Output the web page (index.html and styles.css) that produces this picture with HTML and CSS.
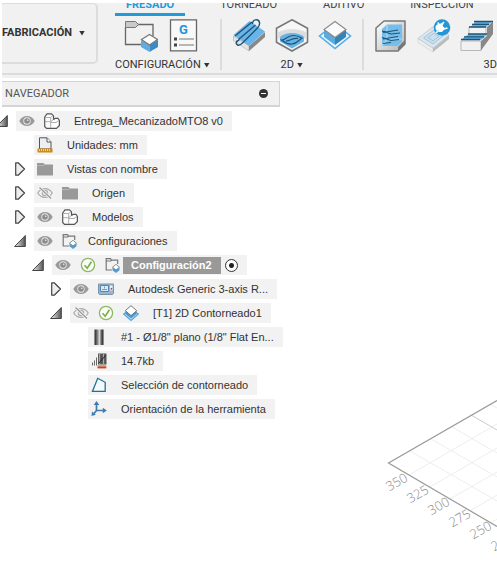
FILE: index.html
```
<!DOCTYPE html>
<html lang="es">
<head>
<meta charset="utf-8">
<meta name="viewport" content="width=device-width, initial-scale=1">
<title>Fabricación</title>
<link rel="stylesheet" href="styles.css">
</head>
<body>
<svg class="sprite" aria-hidden="true">
  <defs>
    <linearGradient id="g-tri" x1="0" y1="0" x2="1" y2="0"><stop offset="0" stop-color="#f4f4f4"/><stop offset="1" stop-color="#555"/></linearGradient>
    <linearGradient id="g-tool" x1="0" y1="0" x2="1" y2="0"><stop offset="0" stop-color="#222"/><stop offset=".3" stop-color="#777"/><stop offset=".55" stop-color="#d8d8d8"/><stop offset=".75" stop-color="#666"/><stop offset="1" stop-color="#222"/></linearGradient>
    <linearGradient id="g-steel" x1="0" y1="0" x2="1" y2="1"><stop offset="0" stop-color="#fff"/><stop offset="1" stop-color="#b5b5b5"/></linearGradient>
  </defs>
  <symbol id="i-open" viewBox="0 0 12 12"><path d="M11.300 .5V11.500H.6z" fill="url(#g-tri)" stroke="#444"/></symbol>
  <symbol id="i-closed" viewBox="0 0 12 14"><path d="M1.700 .8h2.500l6.300 6.200-6.300 6.200H1.700z" fill="#eee" stroke="#444" stroke-width="1.200" stroke-linejoin="round"/></symbol>
  <symbol id="i-eye" viewBox="0 0 16 16"><path d="M.3 8C2 4.700 4.800 3 8 3s6 1.700 7.700 5C14 11.300 11.200 13 8 13S2 11.300.3 8z" fill="#999"/><circle cx="8" cy="8" r="3.700" fill="#e8e8e8"/><circle cx="8" cy="8" r="2.800" fill="#8c8c8c"/><circle cx="8.700" cy="7.200" r=".8" fill="#eee"/></symbol>
  <symbol id="i-eye-off" viewBox="0 0 16 16"><path d="M.8 8C2.500 5 5 3.600 8 3.600S13.500 5 15.200 8C13.500 11 11 12.400 8 12.400S2.500 11 .8 8z" fill="none" stroke="#aaa" stroke-width="1.200"/><circle cx="8" cy="8" r="2.700" fill="none" stroke="#aaa" stroke-width="1.200"/><path d="M2.500 2.500l11.500 11" stroke="#f2f2f2" stroke-width="3"/><path d="M2.500 2.500l11.500 11" stroke="#999" stroke-width="1.200"/></symbol>
  <symbol id="i-part" viewBox="0 0 16 16"><path d="M.7 4L3 .8h4.500L9.500 2.800V6.500L11.300 5.300H14L15.400 7.500v5L12.500 15.400H2.500L.7 13.500z" fill="#fdfdfd" stroke="#555" stroke-width="1.200" stroke-linejoin="round"/><path d="M1 8.700h5.500M6.700 4.500V15M7 9.500h5L15 7.500M1.500 4.500h5L9 2.500M6.700 8.700L9.500 6.500" fill="none" stroke="#999" stroke-width=".8"/></symbol>
  <symbol id="i-units" viewBox="0 0 16 16"><path d="M2.500.8h7.700l3.800 4V12H2.500z" fill="#eceff3" stroke="#555"/><path d="M10 1v4h4" fill="#fff" stroke="#555"/><path d="M.5 11.500h15v4H.5z" fill="#c98b1c"/><path d="M2.500 12v2m2-2v2m2-2v2m2-2v2m2-2v2m2-2v2" stroke="#f8dc83" stroke-width=".9"/></symbol>
  <symbol id="i-folder" viewBox="0 0 16 16"><path d="M0 2h6.500l1.200 1.600H16V14.500H0z" fill="#999"/><path d="M0 4.600h7l1-1" stroke="#bbb" stroke-width=".8" fill="none"/></symbol>
  <symbol id="i-setup" viewBox="0 0 16 16"><path d="M1.200 3.500V13h6M1.200 3.700v-2h4.300l1 1.500h6.200V7M1.200 4h4.500l1-.8" fill="none" stroke="#777" stroke-width="1.200"/><path d="M11 8l3.500 2.500v2.700L11 16l-3.500-2.800v-2.700z" fill="#4e9fd6"/><path d="M11 7.300l3.500 2.900L11 13l-3.500-2.800z" fill="#fff" stroke="#777" stroke-width=".8"/></symbol>
  <symbol id="i-check" viewBox="0 0 16 16"><circle cx="8" cy="8" r="6.600" fill="#fbfdf8" stroke="#8cb960" stroke-width="1.300"/><path d="M4.500 8.300l2.700 2.900 4.200-6.500" fill="none" stroke="#79ad45" stroke-width="1.600"/></symbol>
  <symbol id="i-machine" viewBox="0 0 16 16"><path d="M.5 3h15v9.500l-1 1H1.500l-1-1z" fill="#9db6c7" stroke="#7b93a6"/><path d="M2.500 4.500h8v6h-8z" fill="#d8eafa" stroke="#4a86c0"/><path d="M4 8.500h5M6.500 5.500v2" stroke="#6f9fc8" stroke-width="1"/><path d="M12 4.500h2.500v5H12z" fill="#e9eef2"/><path d="M12.700 7h1.400v1.600h-1.400z" fill="#d33"/></symbol>
  <symbol id="i-contour" viewBox="0 0 16 16"><path d="M.7 9L8 15.400 15.300 9 8 4z" fill="#cce6f7" stroke="#4ea3da" stroke-width="1.200"/><path d="M2.500 5.700V9L8 13.500 13.500 9V5.700z" fill="#4c97cb"/><path d="M8 .7l5.700 5L8 10.600l-5.700-5z" fill="#fff" stroke="#777"/></symbol>
  <symbol id="i-tool" viewBox="0 0 16 16"><path d="M3.500.5h9V16h-9z" fill="url(#g-tool)"/></symbol>
  <symbol id="i-path" viewBox="0 0 16 16"><path d="M1.500 9.500v3m2-5v5m2-8v8" stroke="#666" stroke-width="1"/><path d="M7 .5h8.500v11H7z" fill="#555"/><path d="M8.500 1v10m4-10v10" stroke="#aaa" stroke-width="1.200"/><path d="M7.500 10.500l7-8" stroke="#222"/><path d="M6.500 12h8.800v1.400H6.500z" fill="#e7a07e"/><path d="M6.500 13.400h8.800v2H6.500z" fill="#c9431f"/></symbol>
  <symbol id="i-select" viewBox="0 0 16 16"><path d="M1.500 14.300L6.700 1.300l7.500 4v9z" fill="#f3f9fc" stroke="#1f7193" stroke-width="1.300"/></symbol>
  <symbol id="i-orient" viewBox="0 0 16 16"><path d="M5.500 3v6.500H12M5.500 9.500L3 12.500" fill="none" stroke="#3f7cad" stroke-width="1.700"/><path d="M5.500 0l2.800 4H2.700zM15.800 9.500l-4 2.800V6.700zM.5 15l.5-4.600 3.800 3.400z" fill="#3f7cad"/></symbol>
  <symbol id="t-setup" viewBox="0 0 34 34"><path d="M14 5.500h15V17M1.500 8v17.500H17" fill="none" stroke="#666" stroke-width="1.300"/><path d="M1.500 2.500h10l3 3-3 3h-10z" fill="#c9c9c9" stroke="#777"/><path d="M17 21l8.500 5v7L17 28z" fill="#62abdf"/><path d="M34 21l-8.500 5v7l8.500-5z" fill="#3b8ac5"/><path d="M25.500 15.500L33.500 20.500l-8 5.500-8-5.500z" fill="#fff" stroke="#777" stroke-width="1.200"/></symbol>
  <symbol id="t-post" viewBox="0 0 34 34"><path d="M3.500.8h26v31h-26z" fill="#f8f8f8" stroke="#666" stroke-width="1.300"/><text x="16.500" y="15" class="glyph-g">G</text><path d="M7 18.500h3v3H7zM7 24.500h3v3H7z" fill="#444"/><path d="M12 20h15M12 26h15" stroke="#777" stroke-width="1.200"/></symbol>
  <symbol id="t-face" viewBox="0 0 34 34"><path d="M1.500 17L17 27v5L1.500 21.500z" fill="#e5e5e5" stroke="#aaa" stroke-width=".6"/><path d="M17 27l16-14v5L17 32z" fill="#888"/><path d="M1.500 16L17.500 2 33 12.500 17 27z" fill="#69b4e8"/><g fill="none" stroke="#1d5577" stroke-width="1.400"><path d="M3 17L20 3"/><path d="M6.500 20.500L23.500 6"/><path d="M4.500 23l3-2.500"/><path d="M20.500 5c0-5 6-5.500 7-1.500.6 2.500-.5 4-2.500 6L11 23.500c-2 2-3.500 3.500-5.500 2.500-2-1.200-1.500-3 0-4.500"/></g></symbol>
  <symbol id="t-pocket" viewBox="0 0 34 34"><path d="M17 .8l15.500 8.500v14L17 32 1.500 23.300v-14z" fill="#f7f7f7" stroke="#777" stroke-width="1.600"/><path d="M2.500 14c5-5 24-5 29 0v5.500H2.500z" fill="#ddd"/><path d="M5 18c5-5.500 19-5.500 24 0v4.500L17 29.500 5 22.500z" fill="#68b3e6"/><path d="M6.500 21c4 .5 5-4.500 12-4.500 5 0 6 2 9 2.500-3 1-5 5.500-10.500 6S9 23 6.500 21zM11 22c5 0 5-3 12-2.500" fill="none" stroke="#1d5577" stroke-width="1.200"/></symbol>
  <symbol id="t-contour" viewBox="0 0 34 34"><path d="M7 12.500L1.500 17 17 29.500 32.500 17 27 12.500" fill="#e9f5fd" stroke="#55ade8" stroke-width="1.600"/><path d="M6 10l11 8.500V26L6 18z" fill="#5babdf"/><path d="M28 10l-11 8.500V26l11-8z" fill="#3583b9"/><path d="M17 2.500l11 8-11 8-11-8z" fill="#fbfbfb" stroke="#888" stroke-width="1.100"/></symbol>
  <symbol id="t-adaptive" viewBox="0 0 34 34"><path d="M2 9l8-7h21v23l-7 7H2z" fill="url(#g-steel)" stroke="#777" stroke-width="1.500" stroke-linejoin="round"/><path d="M24 32V28l7-7v4z" fill="#777"/><path d="M8 10l5-4.500h15V23l-5 4H8z" fill="#75bdea"/><path d="M13 5.500V20l-5 7M13 20h15" fill="none" stroke="#a9d9f4" stroke-width="1.200"/><path d="M9 13.500L24 11M8 12l9 3 9-1M9 20l15-2.500M8 18.500l9 3 8-1M9 24.500l8-1" fill="none" stroke="#1d5577" stroke-width="1.200"/></symbol>
  <symbol id="t-probe" viewBox="0 0 34 34"><path d="M1 19.500L16 29v4L1 23.500z" fill="#eee" stroke="#ccc" stroke-width=".6"/><path d="M16 29l16-13v4L16 33z" fill="#bbb"/><path d="M1 19.500L17 7l15 9-16 13z" fill="#d9e7f1" stroke="#c5cdd3"/><path d="M6.500 19l10.500-8 9.500 5.500L16 25zM11 18.800l6-4.500 5 3-6 4.600z" fill="#cbe0ef" stroke="#a3c0d5" stroke-width=".9"/><circle cx="25" cy="8.500" r="8.300" fill="#2197d8"/><path d="M20.500 6.500l6.500 6.500c-2 2-4.500 2-6 .5s-2.500-5-.5-7z" fill="#fff" transform="rotate(90 24 9)"/><path d="M22.500 7L21 3.500M26.500 10l4-1M24 6l3-3M19 14l2.500-2.500" stroke="#fff" stroke-width="1.700"/><path d="M21 7.500l3-2.500 4 4.500-3 3.500h-3.500z" fill="#fff"/></symbol>
  <symbol id="t-steps" viewBox="0 0 34 34"><path d="M1 22h20v9.500H1zM9 8h17v11H9z" fill="#f1f1f1" stroke="#aaa" stroke-width=".8"/><path d="M21 22l6-5V8l6-6v13L21 31.500z" fill="#888"/><path d="M2 20l7-5h18l-6 6H2zM11 7.500L16 2h16l-6 6z" fill="#62ade2"/><path d="M1 20.500h19M4 17.800h20M8 15h19M9 8h17M12 5.300h17M14 2.500h19" stroke="#1d5577" stroke-width="1.300"/></symbol>
</svg>

<div class="app">
  <header class="toolbar">
    <button class="workspace" type="button">FABRICACIÓN<span class="caret"></span></button>
    <div class="ribbon">
      <nav class="tabs" aria-label="Fichas">
        <a class="tab tab--active" href="#fresado">FRESADO</a>
        <a class="tab" href="#torneado">TORNEADO</a>
        <a class="tab" href="#aditivo">ADITIVO</a>
        <a class="tab" href="#inspeccion">INSPECCIÓN</a>
      </nav>
      <div class="groups">
        <section class="group">
          <div class="tools">
            <button type="button" class="tool" aria-label="Nueva configuración"><svg><use href="#t-setup"/></svg></button>
            <button type="button" class="tool" aria-label="Posprocesar"><svg><use href="#t-post"/></svg></button>
          </div>
          <button type="button" class="group-label">CONFIGURACIÓN<span class="caret"></span></button>
        </section>
        <section class="group">
          <div class="tools">
            <button type="button" class="tool" aria-label="Planeado"><svg><use href="#t-face"/></svg></button>
            <button type="button" class="tool" aria-label="Vaciado 2D"><svg><use href="#t-pocket"/></svg></button>
            <button type="button" class="tool" aria-label="Contorneado 2D"><svg><use href="#t-contour"/></svg></button>
          </div>
          <button type="button" class="group-label">2D<span class="caret"></span></button>
        </section>
        <section class="group group--wide">
          <div class="tools">
            <button type="button" class="tool" aria-label="Desbaste adaptativo"><svg><use href="#t-adaptive"/></svg></button>
            <button type="button" class="tool" aria-label="Extensión"><svg><use href="#t-probe"/></svg></button>
            <button type="button" class="tool" aria-label="Paralelo"><svg><use href="#t-steps"/></svg></button>
          </div>
          <button type="button" class="group-label">3D<span class="caret"></span></button>
        </section>
      </div>
    </div>
  </header>

  <main class="workarea">
    <aside class="browser">
      <div class="browser-head"><h2>NAVEGADOR</h2><button type="button" class="collapse" aria-label="Contraer"></button></div>
      <ul class="tree">
        <li>
          <div class="row"><button type="button" class="twist" aria-label="Contraer"><svg class="open"><use href="#i-open"/></svg></button><div class="item"><svg><use href="#i-eye"/></svg><svg><use href="#i-part"/></svg><span class="name">Entrega_MecanizadoMTO8 v0</span></div></div>
          <ul>
            <li><div class="row"><span class="twist"></span><div class="item"><svg><use href="#i-units"/></svg><span class="name">Unidades: mm</span></div></div></li>
            <li><div class="row"><button type="button" class="twist" aria-label="Expandir"><svg><use href="#i-closed"/></svg></button><div class="item"><svg><use href="#i-folder"/></svg><span class="name">Vistas con nombre</span></div></div></li>
            <li><div class="row"><button type="button" class="twist" aria-label="Expandir"><svg><use href="#i-closed"/></svg></button><div class="item"><svg><use href="#i-eye-off"/></svg><svg><use href="#i-folder"/></svg><span class="name">Origen</span></div></div></li>
            <li><div class="row"><button type="button" class="twist" aria-label="Expandir"><svg><use href="#i-closed"/></svg></button><div class="item"><svg><use href="#i-eye"/></svg><svg><use href="#i-part"/></svg><span class="name">Modelos</span></div></div></li>
            <li>
              <div class="row"><button type="button" class="twist" aria-label="Contraer"><svg class="open"><use href="#i-open"/></svg></button><div class="item item--setup"><svg><use href="#i-eye"/></svg><svg><use href="#i-setup"/></svg><span class="name">Configuraciones</span></div></div>
              <ul>
                <li>
                  <div class="row"><button type="button" class="twist" aria-label="Contraer"><svg class="open"><use href="#i-open"/></svg></button><div class="item item--active"><svg><use href="#i-eye"/></svg><svg><use href="#i-check"/></svg><svg><use href="#i-setup"/></svg><label class="name" for="active-setup">Configuración2</label><input type="radio" id="active-setup" class="radio" checked></div></div>
                  <ul>
                    <li><div class="row"><button type="button" class="twist" aria-label="Expandir"><svg><use href="#i-closed"/></svg></button><div class="item"><svg><use href="#i-eye"/></svg><svg><use href="#i-machine"/></svg><span class="name">Autodesk Generic 3-axis R...</span></div></div></li>
                    <li>
                      <div class="row"><button type="button" class="twist" aria-label="Contraer"><svg class="open"><use href="#i-open"/></svg></button><div class="item"><svg><use href="#i-eye-off"/></svg><svg><use href="#i-check"/></svg><svg><use href="#i-contour"/></svg><span class="name">[T1] 2D Contorneado1</span></div></div>
                      <ul>
                        <li><div class="row"><span class="twist"></span><div class="item"><svg><use href="#i-tool"/></svg><span class="name">#1 - Ø1/8" plano (1/8" Flat En...</span></div></div></li>
                        <li><div class="row"><span class="twist"></span><div class="item"><svg><use href="#i-path"/></svg><span class="name">14.7kb</span></div></div></li>
                        <li><div class="row"><span class="twist"></span><div class="item"><svg><use href="#i-select"/></svg><span class="name">Selección de contorneado</span></div></div></li>
                        <li><div class="row"><span class="twist"></span><div class="item"><svg><use href="#i-orient"/></svg><span class="name">Orientación de la herramienta</span></div></div></li>
                      </ul>
                    </li>
                  </ul>
                </li>
              </ul>
            </li>
          </ul>
        </li>
      </ul>
    </aside>
    <svg class="floor" viewBox="370 390 127 182" role="img" aria-label="Rejilla del plano de trabajo">
      <g stroke="#ededed" fill="none">
        <path d="M410 451l87 50M431 439l66 38M452 427l45 26M490 404l7 4"/>
        <path d="M409 475l88-51M430 487l67-39M450 499l47-27M470 511l27-16M491 523l6-4"/>
      </g>
      <path d="M471 415l26 15" stroke="#ccc"/>
      <path d="M497 400.500L388.500 463 497 526.500" fill="none" stroke="#999" stroke-width="1.200"/>
      <g class="ticks">
        <text transform="translate(399 486) rotate(-30)">350</text>
        <text transform="translate(420 498) rotate(-30)">325</text>
        <text transform="translate(441 510) rotate(-30)">300</text>
        <text transform="translate(462 522) rotate(-30)">275</text>
        <text transform="translate(483 534) rotate(-30)">250</text>
        <text transform="translate(504 546) rotate(-30)">225</text>
      </g>
    </svg>
  </main>
</div>
</body>
</html>
```
FILE: styles.css
```
* { box-sizing: border-box; }

body {
  margin: 0;
  background: #fff;
  color: #333;
  font: 11px/20px "Liberation Sans", Arial, sans-serif;
}

button {
  margin: 0;
  padding: 0;
  border: 0;
  background: none;
  color: inherit;
  font: inherit;
}

ul { margin: 0; padding: 0; list-style: none; }
svg { display: block; flex: none; }

.sprite { position: absolute; width: 0; height: 0; }

.app {
  display: flex;
  flex-direction: column;
  min-height: 100vh;
  padding: 3px 0 0 2px;
  overflow: hidden;
}

/* Toolbar */
.toolbar {
  display: flex;
  align-items: flex-start;
  height: 75px;
  overflow: hidden;
  background: linear-gradient(#f1f1f1 70px, #dcdcdc 70px, #dcdcdc 72px, #f1f1f1 72px);
  font-family: Roboto, "Noto Sans", sans-serif;
}

.workspace {
  display: flex;
  flex: none;
  align-items: center;
  gap: 7px;
  width: 96px;
  height: 61px;
  border: solid #dcdcdc;
  border-width: 1px 2px 2px 0;
  border-radius: 0 5px 5px 0;
  font-weight: 700;
}

.caret {
  width: 6px;
  height: 5px;
  background: #333;
  clip-path: polygon(0 0, 100% 0, 50% 100%);
}

.ribbon { flex: 1; min-width: 0; }

.tabs {
  display: flex;
  align-items: flex-end;
  gap: 24px;
  height: 13px;
  padding-left: 17px;
}

.tab {
  flex: none;
  padding: 0 11px 1px;
  border-bottom: 3px solid transparent;
  color: #444;
  line-height: 14px;
  text-decoration: none;
}

.tab--active {
  border-color: #1f9bd9;
  color: #1f9bd9;
  font-weight: 700;
}

.groups { display: flex; padding: 3px 0 0 7px; }

.group {
  display: flex;
  flex: none;
  flex-direction: column;
  align-items: center;
  height: 51px;
  padding: 0 10px;
  border-right: 2px solid #dcdcdc;
}

.group--wide { width: 264px; }
.group--wide .tools { align-self: flex-start; }

.tools { display: flex; gap: 9px; }
.tool, .tool svg { width: 34px; height: 34px; }

.group-label {
  display: flex;
  flex: none;
  align-items: center;
  gap: 3px;
  padding-top: 4px;
  line-height: 16px;
}

.glyph-g {
  fill: #2196dc;
  font: 700 13px Roboto, sans-serif;
  text-anchor: middle;
}

/* Browser panel */
.workarea {
  position: relative;
  flex: 1;
  padding-top: 3px;
}

.browser { position: relative; z-index: 1; width: 278px; }

.browser-head {
  display: flex;
  align-items: center;
  justify-content: space-between;
  height: 26px;
  margin-bottom: 4px;
  padding: 0 11px 0 3px;
  border: solid #d4d4d4;
  border-width: 1px 1px 2px 0;
  background: #f1f1f1;
}

.browser-head h2 {
  margin: 0;
  color: #555;
  font: 11px/20px Roboto, sans-serif;
}

.collapse {
  display: grid;
  place-items: center;
  width: 9px;
  height: 9px;
  border-radius: 50%;
  background: #333;
}

.collapse::before {
  width: 5px;
  height: 1px;
  background: #fff;
  content: "";
}

.tree { margin-left: -6px; }
.tree ul { padding-left: 18px; }

.row { display: flex; height: 24px; }

.twist {
  display: flex;
  flex: none;
  align-items: center;
  width: 20px;
  height: 20px;
}

.twist svg { width: 12px; height: 14px; }
.twist .open { height: 12px; }

.item {
  display: flex;
  flex: none;
  align-items: center;
  gap: 9px;
  height: 20px;
  padding: 0 9px 0 3px;
  background: #f2f2f2;
  white-space: nowrap;
}

.item svg { width: 16px; height: 16px; }
.name { padding-left: 5px; }
.item--setup .name { padding-left: 1px; }

.item--active .name {
  height: 17px;
  margin: 0 -5px 0 -7px;
  padding: 0 9px 0 8px;
  background: #999;
  color: #fff;
  font-weight: 700;
  line-height: 17px;
}

.radio {
  width: 13px;
  height: 13px;
  margin: 0;
  border: 1px solid #333;
  border-radius: 50%;
  appearance: none;
  background: radial-gradient(circle, #222 0 2px, #fff 3px);
}

/* Work plane */
.floor {
  position: absolute;
  right: 0;
  bottom: 0;
  width: 127px;
  height: 182px;
}

.ticks {
  fill: #888;
  font: 300 13px "Open Sans", sans-serif;
  text-anchor: middle;
}
```
